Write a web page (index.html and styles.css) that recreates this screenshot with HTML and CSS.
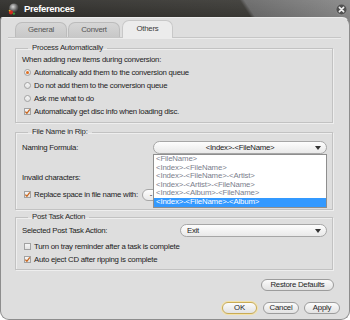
FILE: index.html
```html
<!DOCTYPE html>
<html>
<head>
<meta charset="utf-8">
<title>Preferences</title>
<link rel="stylesheet" href="styles.css">
</head>
<body>
<div class="window">
  <div class="titlebar">
    <svg class="app-icon" width="11" height="12" viewBox="0 0 11 12">
      <defs>
        <radialGradient id="ig" cx="40%" cy="35%" r="65%">
          <stop offset="0" stop-color="#d8d8d8"/>
          <stop offset="0.6" stop-color="#6a6a6a"/>
          <stop offset="1" stop-color="#2a2a2a"/>
        </radialGradient>
      </defs>
      <circle cx="6" cy="5.2" r="4.8" fill="url(#ig)"/>
      <circle cx="3" cy="9.4" r="2.1" fill="#d42a20"/>
      <circle cx="5.9" cy="10.6" r="1.2" fill="#3a9a3a"/>
      <circle cx="1.6" cy="7.6" r="0.9" fill="#e8c020"/>
    </svg>
    <span class="title">Preferences</span>
    <svg class="close" width="13" height="13" viewBox="0 0 13 13">
      <circle cx="6.5" cy="6.5" r="6" fill="#8c8c8c"/>
      <circle cx="6.5" cy="6.5" r="5" fill="#505050"/>
      <path d="M4.4 4.4 L8.6 8.6 M8.6 4.4 L4.4 8.6" stroke="#f2f2f2" stroke-width="1.6" stroke-linecap="round"/>
    </svg>
  </div>
  <div class="client">
    <div class="tabs">
      <div class="tab tab-general">General</div>
      <div class="tab tab-convert">Convert</div>
      <div class="tab tab-others active">Others</div>
    </div>
    <div class="page">
      <fieldset class="group g1">
        <legend>Process Automatically</legend>
        <div class="row">When adding new items during conversion:</div>
        <div class="row opt"><span class="radio on"></span>Automatically add them to the conversion queue</div>
        <div class="row opt"><span class="radio"></span>Do not add them to the conversion queue</div>
        <div class="row opt"><span class="radio"></span>Ask me what to do</div>
        <div class="row opt"><span class="check on"><svg width="7" height="7" viewBox="0 0 7 7"><path d="M1.3 3.6 L2.9 5.3 L5.8 1.4" fill="none" stroke="#c8661e" stroke-width="1.3"/></svg></span>Automatically get disc info when loading disc.</div>
      </fieldset>

      <fieldset class="group g2">
        <legend>File Name in Rip:</legend>
        <div class="row field naming">
          <span>Naming Formula:</span>
          <div class="combo wide centered">
            <span class="combo-text">&lt;Index&gt;-&lt;FileName&gt;</span>
            <span class="arrow"></span>
            <ul class="droplist">
              <li>&lt;FileName&gt;</li>
              <li>&lt;Index&gt;-&lt;FileName&gt;</li>
              <li>&lt;Index&gt;-&lt;FileName&gt;-&lt;Artist&gt;</li>
              <li>&lt;Index&gt;-&lt;Artist&gt;-&lt;FileName&gt;</li>
              <li>&lt;Index&gt;-&lt;Album&gt;-&lt;FileName&gt;</li>
              <li class="sel">&lt;Index&gt;-&lt;FileName&gt;-&lt;Album&gt;</li>
            </ul>
          </div>
        </div>
        <div class="row invalid">Invalid characters:</div>
        <div class="row opt replace"><span class="check on"><svg width="7" height="7" viewBox="0 0 7 7"><path d="M1.3 3.6 L2.9 5.3 L5.8 1.4" fill="none" stroke="#c8661e" stroke-width="1.3"/></svg></span>Replace space in file name with:<span class="smallbox">-</span></div>
      </fieldset>

      <fieldset class="group g3">
        <legend>Post Task Action</legend>
        <div class="row field post">
          <span>Selected Post Task Action:</span>
          <div class="combo exit">
            <span class="combo-text">Exit</span>
            <span class="arrow"></span>
          </div>
        </div>
        <div class="row opt tray"><span class="check"></span>Turn on tray reminder after a task is complete</div>
        <div class="row opt"><span class="check on"><svg width="7" height="7" viewBox="0 0 7 7"><path d="M1.3 3.6 L2.9 5.3 L5.8 1.4" fill="none" stroke="#c8661e" stroke-width="1.3"/></svg></span>Auto eject CD after ripping is complete</div>
      </fieldset>

      <div class="restore-row"><button class="btn restore">Restore Defaults</button></div>
    </div>
    <div class="footer">
      <button class="btn ok">OK</button>
      <button class="btn cancel">Cancel</button>
      <button class="btn apply">Apply</button>
    </div>
  </div>
</div>
</body>
</html>
```

FILE: styles.css
```css
* { box-sizing: border-box; }
html, body { margin: 0; padding: 0; background: #ffffff; }
body {
  font-family: "Liberation Sans", Arial, sans-serif;
  font-size: 7.8px;
  letter-spacing: -0.25px;
  color: #222222;
}

.window {
  width: 350px;
  height: 320px;
  display: flex;
  flex-direction: column;
  border-radius: 0 0 9px 9px;
  background:
    linear-gradient(180deg, rgba(255,255,255,0.07), rgba(0,0,0,0)) top / 100% 17px no-repeat,
    linear-gradient(57deg, #2c2b28 0px, #393834 215px, #676767 219px, #878787 308px) top / 100% 26px no-repeat;
}

.titlebar {
  height: 17px;
  display: flex;
  align-items: center;
  padding: 0 2px 0 8px;
  flex: none;
}
.app-icon { flex: none; margin-top: 1px; }
.title {
  margin-left: 5px;
  color: #ffffff;
  font-weight: bold;
  font-size: 9.5px;
  letter-spacing: -0.35px;
}
.close { margin-left: auto; flex: none; margin-top: 1px; }

.client {
  flex: 1;
  background: #dedede;
  border: 1px solid #8d8d8d;
  border-top: 1px solid #ececec;
  border-radius: 3px 8px 9px 9px;
  display: flex;
  flex-direction: column;
}

.tabs {
  display: flex;
  align-items: flex-end;
  height: 18px;
  margin: 2px 8px 0 7px;
  padding-left: 7px;
  border-bottom: 1px solid #c6c6c6;
  box-shadow: 0 1px 0 #ececec;
}
.tab {
  height: 15px;
  width: 52px;
  margin-right: 1px;
  border: 1px solid #bcbcbc;
  border-bottom: 0;
  border-radius: 7px 7px 0 0;
  background: linear-gradient(180deg, #d6d6d6, #c8c8c8);
  color: #555555;
  text-align: center;
  line-height: 14px;
}
.tab-convert { margin-right: 2px; }
.tab.active {
  height: 18px;
  width: 51px;
  margin-bottom: -1px;
  background: #ececec;
  border-color: #c8c8c8;
  color: #3a3a3a;
  line-height: 15px;
}

.page {
  margin: 0 8px 0 7px;
  padding: 0 8px 0 7px;
  display: flex;
  flex-direction: column;
}

.group {
  margin: 0;
  padding: 0 5px 4px 6px;
  border: 1px solid #c2c2c2;
  box-shadow: inset 1px 1px 0 #eeeeee, 1px 1px 0 #eeeeee;
  min-width: 0;
}
.group legend {
  margin-left: 6px;
  padding: 0 4px;
  height: 10px;
  line-height: 10px;
  color: #2a2a2a;
}
.g1 { margin-top: 5px; }
.g2 { margin-top: 4px; padding-bottom: 8px; }
.g3 { margin-top: 2px; padding-bottom: 3px; }

.row {
  height: 13px;
  line-height: 13px;
  display: flex;
  align-items: center;
  white-space: nowrap;
}
.opt { padding-left: 2px; }

.radio, .check {
  flex: none;
  width: 7px;
  height: 7px;
  margin-right: 3px;
  background: linear-gradient(180deg, #f6f6f6, #e2e2e2);
  border: 1px solid #a2a2a2;
  display: flex;
  align-items: center;
  justify-content: center;
}
.radio { border-radius: 50%; }
.radio.on::after {
  content: "";
  width: 3px;
  height: 3px;
  border-radius: 50%;
  background: #de6f24;
}
.check svg { display: block; margin: -1px; }

.field { justify-content: space-between; }
.naming { margin-top: 4px; }
.invalid { margin-top: 17px; }
.replace { margin-top: 4px; }
.post { margin-top: 2px; }
.tray { margin-top: 3px; }

.combo {
  position: relative;
  height: 13px;
  border: 1px solid #a6a6a6;
  border-radius: 7px;
  background: linear-gradient(180deg, #fdfdfd, #e9e9e9);
  display: flex;
  align-items: center;
  padding: 0 6px;
}
.combo.wide { width: 174px; }
.combo.exit { width: 147px; }
.combo.centered { justify-content: center; }
.combo-text { line-height: 11px; color: #222; }
.arrow {
  position: absolute;
  right: 5px;
  top: 4px;
  width: 0;
  height: 0;
  border-left: 3.5px solid transparent;
  border-right: 3.5px solid transparent;
  border-top: 4px solid #333;
}

.droplist {
  position: absolute;
  top: 12px;
  left: -1px;
  right: -1px;
  margin: 0;
  padding: 0;
  list-style: none;
  background: #ffffff;
  border: 1px solid #8e8e8e;
  z-index: 5;
  font-size: 7.8px;
  letter-spacing: -0.15px;
}
.droplist li {
  height: 8.6px;
  line-height: 8.6px;
  padding-left: 2px;
  color: #7b7e8c;
}
.droplist li.sel {
  background: #3399ff;
  color: #ffffff;
}

.smallbox {
  margin-left: 4px;
  width: 40px;
  height: 12px;
  border: 1px solid #a6a6a6;
  border-radius: 6px;
  background: linear-gradient(180deg, #fdfdfd, #e9e9e9);
  line-height: 10px;
  padding-left: 7px;
}

.restore-row {
  display: flex;
  justify-content: flex-end;
  margin: 9px -1px 0 0;
}

.btn {
  font-family: inherit;
  font-size: 7.8px;
  letter-spacing: -0.25px;
  color: #1e1e1e;
  height: 12px;
  padding: 0;
  line-height: 10px;
  border: 1px solid #9c9c9c;
  border-radius: 6px;
  background: linear-gradient(180deg, #fbfbfb, #e2e2e2);
}
.restore { width: 73px; }

.footer {
  display: flex;
  justify-content: flex-end;
  gap: 5px;
  margin-top: 11px;
  padding-right: 9px;
}
.ok {
  width: 35px;
  border-color: #c9ab55;
  box-shadow: 0 0 0 1px #f3e2a8;
  margin-right: 1px;
}
.cancel { width: 36px; }
.apply { width: 36px; }
```
